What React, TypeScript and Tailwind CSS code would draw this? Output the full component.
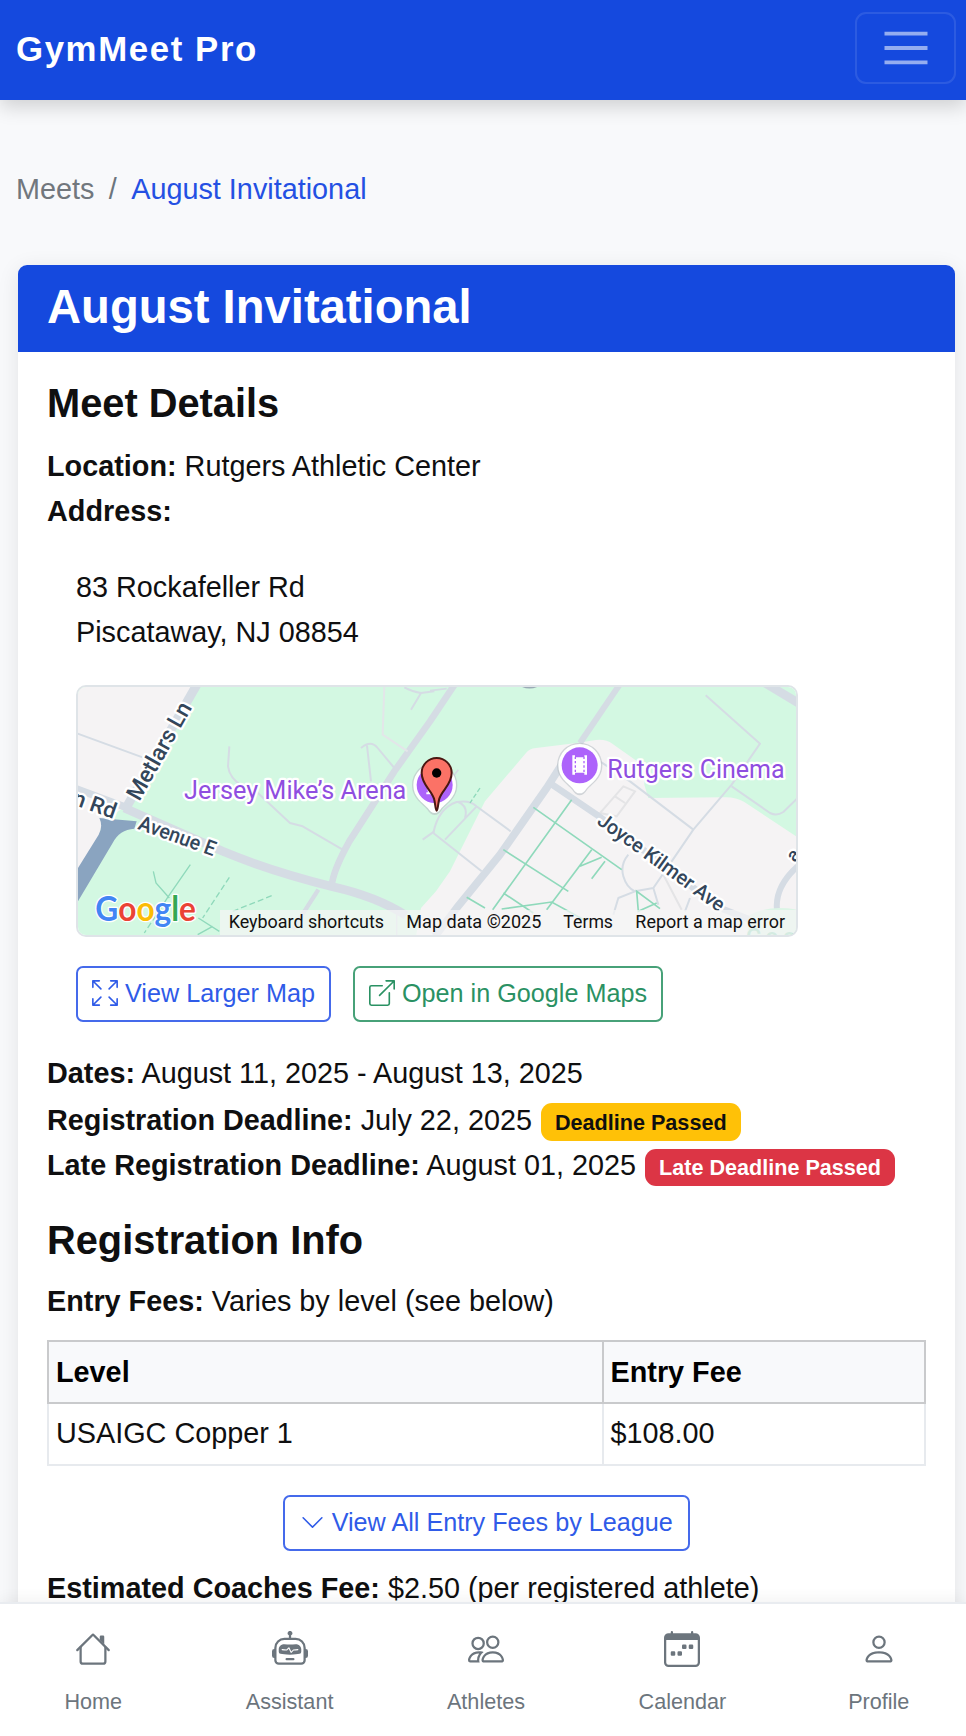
import type { ReactNode } from 'react';
import {
  BsArrowsFullscreen,
  BsBoxArrowUpRight,
  BsCalendarWeek,
  BsChevronDown,
  BsPeople,
  BsPerson,
  BsRobot,
} from 'react-icons/bs';

function HouseIcon() {
  return (
    <svg viewBox="0 0 16 16" fill="currentColor" className="size-9">
      <path
        fillRule="evenodd"
        d="M2 13.5V7h1v6.5a.5.5 0 0 0 .5.5h9a.5.5 0 0 0 .5-.5V7h1v6.5a1.5 1.5 0 0 1-1.5 1.5h-9A1.5 1.5 0 0 1 2 13.5zm11-11V6l-2-2V2.5a.5.5 0 0 1 .5-.5h1a.5.5 0 0 1 .5.5z"
      />
      <path
        fillRule="evenodd"
        d="M7.293 1.5a1 1 0 0 1 1.414 0l6.647 6.646a.5.5 0 0 1-.708.708L8 2.207 1.354 8.854a.5.5 0 1 1-.708-.708L7.293 1.5z"
      />
    </svg>
  );
}

const halo = { paintOrder: 'stroke' as const, stroke: '#fff', strokeWidth: 14, strokeLinejoin: 'round' as const };

function VenueMap() {
  return (
    <svg viewBox="36 37 2154 744" preserveAspectRatio="none" className="block h-full w-full" fontFamily="Roboto, sans-serif">
      <rect x="30" y="31" width="2165" height="754" fill="#d3f8e2" />
      <path d="M30 31H378L172 400 110 440 95 500 30 610Z" fill="#f5f3f4" />
      <path
        d="M1050 785 1065 700 1110 650 1152 590 1257 380 1380 235Q1390 222 1410 220L1532 205 1590 196Q1620 193 1640 208L1735 275 1735 330 1747 370 1975 368Q2010 367 2035 382L2195 488V785Z"
        fill="#f5f3f4"
      />
      <g fill="none" stroke="#d5dce4" strokeLinejoin="round">
        <path d="M392 31 183 395" strokeWidth="27" />
        <path d="M30 342 185 400" strokeWidth="22" />
        <path d="M175 400 470 530Q620 592 800 636 930 665 1020 722" strokeWidth="26" />
        <path d="M1165 31 1092 140 985 290 850 500Q800 590 797 635" strokeWidth="20" />
        <path d="M757 645 680 765" strokeWidth="13" />
        <path d="M992 700V785" strokeWidth="4" />
        <path
          d="M30 175 240 252M490 215 486 275Q490 310 530 335L570 350 672 445 710 455 830 525M885 220Q915 195 935 220L985 280M903 213 915 320M1015 38Q1040 52 1065 55L1105 50M1065 55 1035 105M1070 495 1105 470"
          strokeWidth="6"
        />
        <path d="M955 35 950 180 1025 230" strokeWidth="6" stroke="#e3e6e9" />
      </g>
      <g fill="none" stroke="#8fd9bb" strokeWidth="4">
        <path d="M373 570 305 668 285 700M262 590 270 625 310 670M397 730 460 770M395 780 440 755" />
        <path d="M490 608 410 730M617 663 500 710M285 700 235 775" strokeDasharray="18 9" />
      </g>
      <path d="M100 430 212 440 205 462Q160 465 140 505L30 690V590L98 480Q112 455 100 430Z" fill="#8aa4c0" />

      <g transform="translate(1092 0)">
        <g fill="none" stroke="#e4e4e6" strokeWidth="6">
          <path d="M580 335 615 350 560 425 510 415ZM555 365 585 385M700 600 755 705" />
        </g>
        <g fill="none" stroke="#d5dce4" strokeLinejoin="round">
          <path d="M568 31 450 205" strokeWidth="18" />
          <path d="M395 270 350 340 210 540 80 700 15 785" strokeWidth="23" />
          <path d="M355 322 500 420 870 700 960 735" strokeWidth="20" />
          <path d="M1005 25 1110 88" strokeWidth="26" />
          <path d="M1103 575Q1030 640 1042 715" strokeWidth="18" />
          <path
            d="M510 260 600 320 790 465M827 62 990 207 905 330 790 465 725 560M905 335 1020 415Q1040 425 1060 412L1103 370M595 540Q570 570 580 605 590 640 615 650L670 640 725 560M670 640 685 690M615 650 565 670 550 720M780 670 765 710M130 388 242 470M10 475 155 590M45 495 140 395M10 475Q25 400 80 382 120 375 140 395M85 382Q115 395 105 430"
            strokeWidth="6"
          />
          <path d="M70 305 85 285M0 48 50 42" strokeWidth="5" />
        </g>
        <g fill="none" stroke="#8fd9bb" strokeWidth="5">
          <path d="M310 398 575 585M425 375 188 705M220 525 415 650M485 525 350 705M450 575 515 548M525 560 485 612M110 668 165 700M220 655 310 715M215 703 365 682 470 740M690 702 620 650 625 710 680 685" />
          <path d="M150 340 120 385" strokeDasharray="14 7" strokeWidth="4" />
        </g>
        <path d="M268 33Q298 50 330 33Z" fill="#9aaab5" />
        <path d="M960 720Q1020 690 1103 705V785H950Z" fill="#dcf5e6" />
        <text x="948" y="810" fontSize="70" fill="#7fcfae" fontWeight="500" textLength="150">Coo</text>
        <text transform="translate(1094 566) rotate(-50)" fontSize="58" fill="#2f4358" fontWeight="500" {...halo}>a</text>
      </g>

      <g fontWeight="500" fill="#33465a">
        <text transform="translate(220 382) rotate(-60.7)" fontSize="69" textLength="325" lengthAdjust="spacingAndGlyphs" {...halo}>Metlars Ln</text>
        <text transform="translate(213 462) rotate(20)" fontSize="62" textLength="242" lengthAdjust="spacingAndGlyphs" {...halo}>Avenue E</text>
        <text transform="translate(16 388) rotate(19.5)" fontSize="66" textLength="134" lengthAdjust="spacingAndGlyphs" {...halo}>n Rd</text>
        <text transform="translate(1590 446) rotate(36)" fontSize="61" textLength="455" lengthAdjust="spacingAndGlyphs" {...halo}>Joyce Kilmer Ave</text>
      </g>
      <g fill="#8f4ee0">
        <text x="354" y="372" fontSize="76" textLength="667" lengthAdjust="spacingAndGlyphs" {...halo}>Jersey Mike’s Arena</text>
        <text x="1624" y="311" fontSize="76" textLength="532" lengthAdjust="spacingAndGlyphs" {...halo}>Rutgers Cinema</text>
      </g>

      <g transform="translate(1541 272)">
        <path d="M0 90Q-12 90-22 74C-38 55-68 40-68 0A68 68 0 0 1 68 0C68 40 38 55 22 74Q12 90 0 90Z" fill="#b9c0c4" opacity=".6" />
        <path d="M0 84Q-12 84-20 70C-36 52-64 38-64 0A64 64 0 0 1 64 0C64 38 36 52 20 70Q12 84 0 84Z" fill="#fff" />
        <circle r="54" fill="#ad63fb" />
        <path d="M-22-30H-14V-24H14V-30H22V28H14V22H-14V28H-22Z" fill="#fff" />
        <path d="M-13-26V26M13-26V26" stroke="#ad63fb" strokeWidth="4" strokeDasharray="7 6" />
      </g>
      <g transform="translate(1106 331)">
        <path d="M0 90Q-12 90-22 74C-38 55-68 40-68 0A68 68 0 0 1 68 0C68 40 38 55 22 74Q12 90 0 90Z" fill="#b9c0c4" opacity=".6" />
        <path d="M0 84Q-12 84-20 70C-36 52-64 38-64 0A64 64 0 0 1 64 0C64 38 36 52 20 70Q12 84 0 84Z" fill="#fff" />
        <circle r="54" fill="#ad63fb" />
        <path d="M-25 0H-14V20H8V28H-25V22H-20Z" fill="#fff" />
      </g>
      <path
        d="M1112 408C1108 408 1108 385 1104 372 1096 346 1067 330 1067 295A45 45 0 0 1 1157 295C1157 330 1128 346 1120 372 1116 385 1116 408 1112 408Z"
        fill="#fb7266"
        stroke="#4a1712"
        strokeWidth="6"
      />
      <circle cx="1112" cy="295" r="14" fill="#000" />

      <text x="88" y="740" fontSize="103" fontFamily="Lato, sans-serif" fontWeight="700" textLength="302" lengthAdjust="spacingAndGlyphs" {...halo} strokeWidth={8}>
        <tspan fill="#4285f4">G</tspan>
        <tspan fill="#ea4335">o</tspan>
        <tspan fill="#fbbc05">o</tspan>
        <tspan fill="#4285f4">g</tspan>
        <tspan fill="#34a853">l</tspan>
        <tspan fill="#ea4335">e</tspan>
      </text>

      <rect x="462" y="706" width="1733" height="79" fill="#f5f5f5" opacity=".72" />
      <g fontSize="56" fill="#111">
        <text x="488" y="761" textLength="466" lengthAdjust="spacingAndGlyphs">Keyboard shortcuts</text>
        <text x="1021" y="761" textLength="405" lengthAdjust="spacingAndGlyphs">Map data ©2025</text>
        <text x="1492" y="761" textLength="149" lengthAdjust="spacingAndGlyphs">Terms</text>
        <text x="1708" y="761" textLength="449" lengthAdjust="spacingAndGlyphs">Report a map error</text>
      </g>
    </svg>
  );
}

function Field({ label, children }: { label: string; children?: ReactNode }) {
  return (
    <p className="h-[45px] whitespace-nowrap">
      <strong className="font-bold">{label}</strong> {children}
    </p>
  );
}

const tabs = [
  { label: 'Home', icon: <HouseIcon /> },
  { label: 'Assistant', icon: <BsRobot className="size-9" /> },
  { label: 'Athletes', icon: <BsPeople className="size-9" /> },
  { label: 'Calendar', icon: <BsCalendarWeek className="size-9" /> },
  { label: 'Profile', icon: <BsPerson className="size-9" /> },
];

export default function App() {
  return (
    <div className="flex h-[1736px] w-[966px] flex-col overflow-hidden bg-[#f8f9fb] font-['Liberation_Sans',Arial,sans-serif] text-[28.8px] leading-[45px] text-[#0f0f10]">
      <header className="z-10 flex h-[100px] shrink-0 items-center justify-between bg-[#1549de] pr-[10px] pb-1 pl-4 shadow-[0_7px_18px_rgba(0,0,0,0.16)]">
        <span className="text-[34.8px] font-bold tracking-[1.6px] text-white">GymMeet Pro</span>
        <button className="flex h-[72px] w-[101px] items-center justify-center rounded-[11px] border-2 border-white/10">
          <svg viewBox="0 0 54 54" className="size-[54px]" stroke="rgba(255,255,255,0.55)" strokeWidth="3.8">
            <path d="M5.5 12.6H48.5M5.5 27H48.5M5.5 41.4H48.5" />
          </svg>
        </button>
      </header>

      <main className="flex min-h-0 flex-1 flex-col pt-[67px]">
        <nav className="flex h-[45px] shrink-0 pl-4 whitespace-nowrap">
          <span className="text-[#71777d]">Meets</span>
          <span className="px-[14.4px] text-[#6c757d]">/</span>
          <span className="text-[#2450e3]">August Invitational</span>
        </nav>

        <section className="mt-[53px] ml-[18px] h-[1400px] w-[936.5px] shrink-0 overflow-hidden rounded-t-[9px] bg-white shadow-[0_4px_22px_rgba(0,0,0,0.09)]">
          <h1 className="h-[87px] bg-[#1549de] pt-[14px] pl-[29px] text-[47.2px] leading-[56px] font-bold text-white">
            August Invitational
          </h1>
          <div className="flex flex-col pt-[27px] pr-[29px] pl-[29px]">
            <h2 className="text-[39.8px] leading-[48px] font-bold">Meet Details</h2>
            <div className="mt-[17px]">
              <Field label="Location:">Rutgers Athletic Center</Field>
              <Field label="Address:" />
            </div>
            <address className="mt-[31px] ml-[29px] whitespace-nowrap not-italic">
              83 Rockafeller Rd
              <br />
              Piscataway, NJ 08854
            </address>
            <div className="mt-[30px] ml-[29px] h-[252px] w-[722px] overflow-hidden rounded-[10px] border-2 border-[#dfe4e8]">
              <VenueMap />
            </div>
            <div className="mt-[29px] ml-[29px] flex gap-[22px] text-[25.2px]">
              <button className="flex h-[56px] w-[255px] items-center justify-center gap-[7px] rounded-[7px] border-2 border-[#456aeb] pb-[2px] text-[#2f5be8]">
                <BsArrowsFullscreen className="size-[26px]" />
                View Larger Map
              </button>
              <button className="flex h-[56px] w-[310px] items-center justify-center gap-[7px] rounded-[7px] border-2 border-[#47a178] pb-[2px] text-[#2a9163]">
                <BsBoxArrowUpRight className="size-[26px]" />
                Open in Google Maps
              </button>
            </div>
            <div className="mt-[29px]">
              <Field label="Dates:">August 11, 2025 - August 13, 2025</Field>
              <div className="mt-[2px] flex">
                <Field label="Registration Deadline:">July 22, 2025</Field>
                <span className="mt-[5px] ml-[9px] flex h-[38px] items-center rounded-[11px] bg-[#ffc107] px-[14px] text-[21.6px] font-bold">
                  Deadline Passed
                </span>
              </div>
              <div className="flex">
                <Field label="Late Registration Deadline:">August 01, 2025</Field>
                <span className="mt-[6px] ml-[9px] flex h-[37px] items-center rounded-[11px] bg-[#dc3545] px-[14px] text-[21.6px] font-bold text-white">
                  Late Deadline Passed
                </span>
              </div>
            </div>
            <h2 className="mt-7 text-[39.8px] leading-[48px] font-bold">Registration Info</h2>
            <div className="mt-[15px]">
              <Field label="Entry Fees:">Varies by level (see below)</Field>
            </div>
            <table className="mt-4 w-[879px] table-fixed border-collapse text-left">
              <thead>
                <tr className="h-[62px] bg-[#f8f9fb] text-black">
                  <th className="w-[554.5px] border-2 border-[#c9cacc] pl-[7px] font-bold">Level</th>
                  <th className="border-2 border-[#c9cacc] pl-[7px] font-bold">Entry Fee</th>
                </tr>
              </thead>
              <tbody>
                <tr className="h-[62px]">
                  <td className="border-2 border-[#e7eaee] pb-[2px] pl-[7px]">USAIGC Copper 1</td>
                  <td className="border-2 border-[#e7eaee] pb-[2px] pl-[7px]">$108.00</td>
                </tr>
              </tbody>
            </table>
            <button className="mt-[29px] flex h-[56px] w-[407px] items-center justify-center gap-[7px] self-center rounded-[7px] border-2 border-[#456aeb] pb-[2px] text-[25.2px] text-[#2f5be8]">
              <BsChevronDown className="size-[25px]" />
              View All Entry Fees by League
            </button>
            <div className="mt-[15px]">
              <Field label="Estimated Coaches Fee:">$2.50 (per registered athlete)</Field>
            </div>
          </div>
        </section>
      </main>

      <footer className="z-10 h-[134px] shrink-0 overflow-hidden border-t-2 border-[#e9ecf0] bg-white shadow-[0_-3px_14px_rgba(0,0,0,0.05)]">
        <div className="-ml-[5px] grid w-[982px] grid-cols-5 pt-[27px] text-[21.6px] text-[#6c757d]">
          {tabs.map((tab) => (
            <div key={tab.label} className="flex flex-col items-center">
              {tab.icon}
              <span className="mt-3">{tab.label}</span>
            </div>
          ))}
        </div>
      </footer>
    </div>
  );
}
